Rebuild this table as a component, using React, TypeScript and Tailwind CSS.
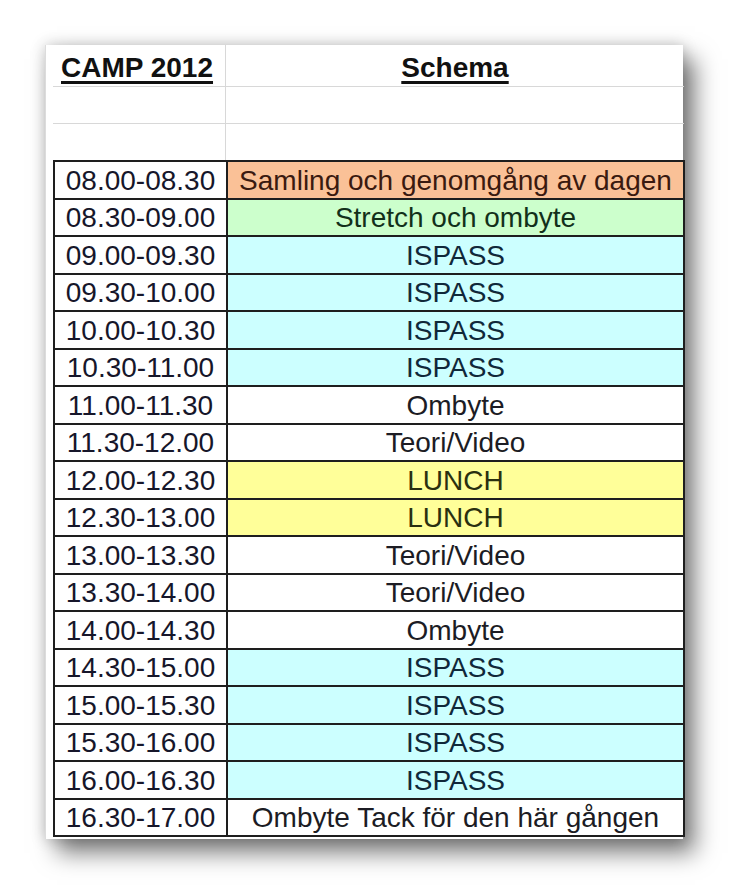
type Slot = {
  time: string;
  label: string;
  bg: string;
  text: string;
};

// Background fills used in the sheet
const ORANGE = 'bg-[#fac197]';
const GREEN = 'bg-[#ccffcc]';
const CYAN = 'bg-[#ccffff]';
const YELLOW = 'bg-[#ffff99]';
const WHITE = 'bg-white';

const slots: Slot[] = [
  { time: '08.00-08.30', label: 'Samling och genomgång av dagen', bg: ORANGE, text: 'text-[#3a1a10]' },
  { time: '08.30-09.00', label: 'Stretch och ombyte', bg: GREEN, text: 'text-[#12301a]' },
  { time: '09.00-09.30', label: 'ISPASS', bg: CYAN, text: 'text-[#10283a]' },
  { time: '09.30-10.00', label: 'ISPASS', bg: CYAN, text: 'text-[#10283a]' },
  { time: '10.00-10.30', label: 'ISPASS', bg: CYAN, text: 'text-[#10283a]' },
  { time: '10.30-11.00', label: 'ISPASS', bg: CYAN, text: 'text-[#10283a]' },
  { time: '11.00-11.30', label: 'Ombyte', bg: WHITE, text: 'text-[#1c1c24]' },
  { time: '11.30-12.00', label: 'Teori/Video', bg: WHITE, text: 'text-[#1c1c24]' },
  { time: '12.00-12.30', label: 'LUNCH', bg: YELLOW, text: 'text-[#2a3010]' },
  { time: '12.30-13.00', label: 'LUNCH', bg: YELLOW, text: 'text-[#2a3010]' },
  { time: '13.00-13.30', label: 'Teori/Video', bg: WHITE, text: 'text-[#1c1c24]' },
  { time: '13.30-14.00', label: 'Teori/Video', bg: WHITE, text: 'text-[#1c1c24]' },
  { time: '14.00-14.30', label: 'Ombyte', bg: WHITE, text: 'text-[#1c1c24]' },
  { time: '14.30-15.00', label: 'ISPASS', bg: CYAN, text: 'text-[#10283a]' },
  { time: '15.00-15.30', label: 'ISPASS', bg: CYAN, text: 'text-[#10283a]' },
  { time: '15.30-16.00', label: 'ISPASS', bg: CYAN, text: 'text-[#10283a]' },
  { time: '16.00-16.30', label: 'ISPASS', bg: CYAN, text: 'text-[#10283a]' },
  { time: '16.30-17.00', label: 'Ombyte Tack för den här gången', bg: WHITE, text: 'text-[#1c1c24]' },
];

export default function App() {
  return (
    <div
      className="w-[730px] h-[885px] bg-white overflow-hidden pt-[45px] pl-[45px]"
      style={{ fontFamily: '"Liberation Sans", Arial, sans-serif' }}
    >
      {/* Sheet panel with its drop shadow */}
      <div className="w-[638px] bg-white pl-[7px] pb-[2px] border-l border-[#dcdcdc] shadow-[0_0_14px_rgba(0,0,0,0.22),12px_14px_22px_rgba(0,0,0,0.5)]">
        {/* Header rows: light grid only */}
        <div className="grid grid-cols-[173px_458px] text-[28px] leading-none text-[#111]">
          <div className="h-[42px] flex items-center pl-[8px] pt-[4px] border-b border-r border-[#d8d8d8]">
            <span className="font-bold underline decoration-[3px] underline-offset-[4px]">CAMP 2012</span>
          </div>
          <div className="h-[42px] flex items-center justify-center pt-[4px] border-b border-[#d8d8d8]">
            <span className="font-bold underline decoration-[3px] underline-offset-[4px]">Schema</span>
          </div>
          <div className="h-[37px] border-b border-r border-[#d8d8d8]" />
          <div className="h-[37px] border-b border-[#d8d8d8]" />
          <div className="h-[36px] border-r border-[#d8d8d8]" />
          <div className="h-[36px]" />
        </div>

        {/* Time slots */}
        <table className="w-[632px] border-collapse text-[28px] leading-none">
          <tbody>
            {slots.map((s) => (
              <tr key={s.time} className="h-[37.5px]">
                <td className="w-[173px] p-0 pt-[2px] border-2 border-[#1e1e1e] text-center text-[#16162a] bg-white">
                  {s.time}
                </td>
                <td className={`p-0 pt-[2px] border-2 border-[#1e1e1e] text-center ${s.bg} ${s.text}`}>
                  {s.label}
                </td>
              </tr>
            ))}
          </tbody>
        </table>
      </div>
    </div>
  );
}
